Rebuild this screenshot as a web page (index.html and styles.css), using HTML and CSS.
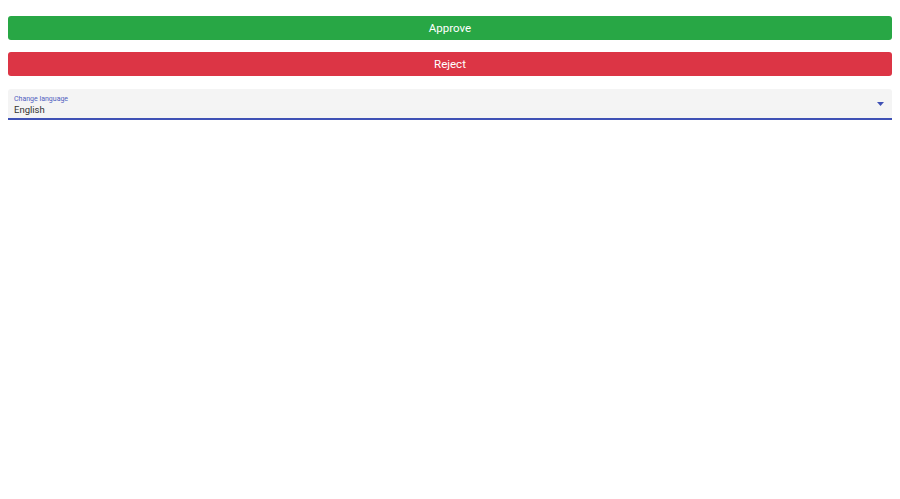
FILE: index.html
```html
<!DOCTYPE html>
<html lang="en">
<head>
  <meta charset="UTF-8">
  <title>Consent</title>
  <link rel="stylesheet" href="styles.css">
</head>
<body>
  <div class="actions">
    <button class="btn btn-approve">Approve</button>
    <button class="btn btn-reject">Reject</button>

    <!-- language select -->
    <div class="select-field">
      <label class="select-label">Change language</label>
      <div class="select-value">English</div>
      <svg class="select-arrow" width="7" height="4" viewBox="0 0 7 4">
        <path d="M0 0 L7 0 L3.5 4 Z" fill="#3f51b5"/>
      </svg>
    </div>
  </div>
</body>
</html>
```

FILE: styles.css
```css
/* layout */
body {
  margin: 0;
  padding: 16px 8px 0;
  font-family: Roboto, "Liberation Sans", sans-serif;
  background: #fff;
}
.actions { display: flex; flex-direction: column; }

/* buttons */
.btn {
  height: 24px;
  border: none;
  border-radius: 3px;
  color: #fff;
  font-family: inherit;
  font-size: 11.5px;
  cursor: pointer;
  padding: 0;
}
.btn-approve { background: #28a745; margin-bottom: 12px; }
.btn-reject { background: #dc3545; margin-bottom: 13px; }

/* select field */
.select-field {
  position: relative;
  background: #f4f4f4;
  border-bottom: 2px solid #3f51b5;
  border-radius: 3px 3px 0 0;
  padding: 6px 6px 0;
  height: 23px;
}
.select-label {
  display: block;
  font-size: 7px;
  color: #5060c0;
  line-height: 9px;
}
.select-value {
  font-size: 9.5px;
  color: #333;
  line-height: 12px;
}
.select-arrow {
  position: absolute;
  right: 8px;
  top: 13px;
}
```
